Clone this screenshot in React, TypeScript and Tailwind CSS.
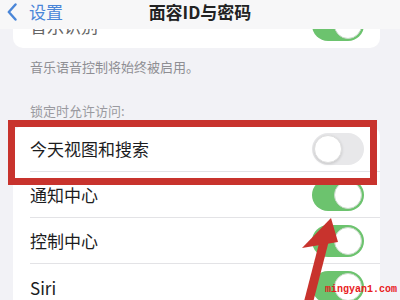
import React from "react";

const font = { fontFamily: '"Noto Sans CJK SC", "Noto Sans", sans-serif' };

function Toggle({ on }: { on: boolean }) {
  return on ? (
    <div className="flex h-[32px] w-[52px] items-center justify-end rounded-full bg-[#6cc36e] p-[2px]">
      <div className="h-[28px] w-[28px] rounded-full border border-[#c9d9c9] bg-white" />
    </div>
  ) : (
    <div className="flex h-[32px] w-[52px] items-center justify-start rounded-full bg-[#e8e8ea] p-[2px]">
      <div className="h-[28px] w-[28px] rounded-full border border-[#dedede] bg-white shadow-[0_1px_3px_rgba(0,0,0,0.15)]" />
    </div>
  );
}

function Row({ label, on, sep = true }: { label: string; on: boolean; sep?: boolean }) {
  return (
    <div className="flex h-[46px] items-stretch pl-[17px]">
      <div className={`flex flex-1 items-center justify-between pr-[16px] ${sep ? "border-b border-[#e3e3e6]" : ""}`}>
        <span className="text-[17px] leading-none text-[#1c1c1e]">{label}</span>
        <Toggle on={on} />
      </div>
    </div>
  );
}

export default function App() {
  return (
    <div className="relative h-[300px] w-[400px] overflow-hidden bg-[#f2f2f6]" style={font}>
      {/* first card tail (under the nav bar) */}
      <div className="ml-[13px] flex h-[48px] w-[367px] flex-col justify-end rounded-b-[10px] bg-white">
        <div className="flex h-[46px] items-center justify-between pl-[17px] pr-[16px]">
          <span className="text-[17px] leading-none text-[#666]">音乐识别</span>
          <Toggle on={true} />
        </div>
      </div>

      {/* footer */}
      <div className="mt-[10px] pl-[30px] text-[13px] leading-[18px] text-[#8e8e93]">音乐语音控制将始终被启用。</div>

      {/* section header */}
      <div className="mt-[26px] pl-[30px] text-[13px] leading-[18px] text-[#9a9aa0]">锁定时允许访问:</div>

      {/* card 2 */}
      <div className="ml-[13px] mt-[6px] w-[367px] overflow-hidden rounded-t-[10px] bg-white">
        <Row label="今天视图和搜索" on={false} />
        <Row label="通知中心" on={true} />
        <Row label="控制中心" on={true} />
        <Row label="Siri" on={true} sep={false} />
      </div>

      {/* nav bar overlay */}
      <div className="absolute inset-x-0 top-0 grid h-[29px] grid-cols-[1fr_auto_1fr] items-start bg-[#f7f7f8] pt-[1px]">
        <div className="flex h-[22px] items-center gap-[12px] pl-[7px]">
          <svg width="10" height="18" viewBox="0 0 10 18">
            <path d="M8.5 1.5 L1.8 9 L8.5 16.5" fill="none" stroke="#4a86d8" strokeWidth="2.4" strokeLinecap="round" strokeLinejoin="round" />
          </svg>
          <span className="text-[17px] leading-[22px] text-[#4a86d8]">设置</span>
        </div>
        <span className="text-[17px] font-semibold leading-[22px] text-[#222]">面容ID与密码</span>
        <div />
      </div>

      {/* red highlight box */}
      <div className="absolute left-[8px] top-[120px] h-[65px] w-[369px] border-[7px] border-[#c8332d]" />

      {/* arrow */}
      <svg className="absolute left-0 top-0" width="400" height="300" viewBox="0 0 400 300">
        <line x1="308" y1="304" x2="325" y2="238" stroke="#c8332d" strokeWidth="9" />
        <polygon points="331,218 302,248 338,242" fill="#c8332d" />
      </svg>

      {/* watermark */}
      <div
        className="absolute left-[325px] top-[283px] text-[10px] font-bold leading-[14px] text-[#e8201c]"
        style={{ fontFamily: '"Liberation Mono", monospace' }}
      >
        mingyan1.com
      </div>
    </div>
  );
}
